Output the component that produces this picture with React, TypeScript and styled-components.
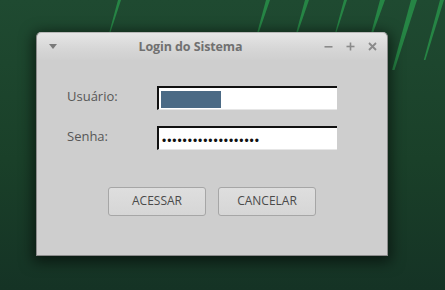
import React from 'react';
import styled, { createGlobalStyle } from 'styled-components';

const GlobalStyle = createGlobalStyle`
	html, body {
		margin: 0;
		padding: 0;
		width: 445px;
		height: 290px;
		overflow: hidden;
	}
	body {
		font-family: 'Open Sans', 'Noto Sans', sans-serif;
	}
`;

const Desktop = styled.div`
	position: relative;
	width: 445px;
	height: 290px;
	overflow: hidden;
	background: linear-gradient(180deg, #1f4a31 0%, #1a4029 55%, #153325 100%);
`;

const Wallpaper = styled.svg`
	position: absolute;
	left: 0;
	top: 0;
`;

const Window = styled.div`
	position: absolute;
	left: 36px;
	top: 32px;
	width: 350px;
	height: 222px;
	display: flex;
	flex-direction: column;
	background: #cecece;
	border: 1px solid #8c8c8c;
	border-top-color: #b8b8b8;
	border-radius: 5px 5px 0 0;
	box-shadow: 0 3px 14px 3px rgba(0, 0, 0, 0.55);
`;

const TitleBar = styled.div`
	height: 27px;
	display: flex;
	align-items: center;
	padding: 0 10px 0 12px;
	border-radius: 5px 5px 0 0;
	background: linear-gradient(180deg, #e6e6e6 0%, #d6d6d6 60%, #cfcfcf 100%);
`;

const Title = styled.div`
	flex: 1;
	text-align: center;
	font-family: 'Open Sans', sans-serif;
	font-weight: 700;
	font-size: 12.5px;
	color: #707070;
	letter-spacing: -0.1px;
`;

const Controls = styled.div`
	display: flex;
	align-items: center;
	gap: 13px;
`;

const IconBox = styled.svg`
	display: block;
	flex: none;
`;

const Body = styled.div`
	flex: 1;
	display: flex;
	flex-direction: column;
	padding: 26px 0 0 30px;
`;

const Form = styled.div`
	display: grid;
	grid-template-columns: 90px 180px;
	row-gap: 16px;
	align-items: center;
`;

const Label = styled.label`
	font-size: 13px;
	color: #575757;
	padding-bottom: 5px;
`;

const Field = styled.div`
	box-sizing: border-box;
	height: 24px;
	display: flex;
	align-items: center;
	padding: 2px 3px 1px 2px;
	background: #ffffff;
	border-top: 2px solid #111;
	border-left: 2px solid #111;
	border-bottom: 1px solid #e6e6e6;
`;

const Selection = styled.span`
	display: block;
	width: 60px;
	height: 17px;
	margin-top: 1px;
	background: #4b6a85;
`;

const Dots = styled.span`
	font-family: 'Liberation Sans', sans-serif;
	font-size: 12px;
	letter-spacing: 0.95px;
	color: #111;
	padding-top: 3px;
	padding-left: 1px;
`;

const Actions = styled.div`
	display: flex;
	justify-content: center;
	gap: 12px;
	margin-top: 37px;
	padding-right: 30px;
`;

const Button = styled.button`
	box-sizing: border-box;
	width: 98px;
	height: 29px;
	border: 1px solid #a6a6a6;
	border-radius: 3px;
	background: linear-gradient(180deg, #dedede 0%, #d6d6d6 100%);
	font-family: 'Open Sans', sans-serif;
	font-size: 12px;
	color: #4a4a4a;
	padding: 0;
	padding-bottom: 2px;
`;

const streaks = [
	{ x: 118, w: 3, len: 32 },
	{ x: 266, w: 4, len: 32 },
	{ x: 305, w: 4, len: 32 },
	{ x: 344, w: 3, len: 32 },
	{ x: 380, w: 5, len: 32 },
	{ x: 411, w: 6, len: 70 },
	{ x: 440, w: 4, len: 60 },
];

const App = () => {
	return (
		<Desktop>
			<GlobalStyle />
			<Wallpaper width="445" height="290" viewBox="0 0 445 290">
				{streaks.map((s, i) => (
					<polygon
						key={i}
						points={`${s.x},0 ${s.x + s.w},0 ${s.x + s.w * 0.4 - s.len * 0.27},${s.len} ${s.x - s.len * 0.27},${s.len}`}
						fill="#2a9a4c"
						opacity={0.75}
					/>
				))}
			</Wallpaper>
			<Window>
				<TitleBar>
					<IconBox width="8" height="5" viewBox="0 0 8 5">
						<polygon points="0,0 8,0 4,5" fill="#7a7a7a" />
					</IconBox>
					<Title>Login do Sistema</Title>
					<Controls>
						<IconBox width="9" height="9" viewBox="0 0 9 9">
							<rect x="0.5" y="4" width="8" height="1.6" fill="#8a8a8a" />
						</IconBox>
						<IconBox width="9" height="9" viewBox="0 0 9 9">
							<rect x="0.5" y="3.7" width="8" height="1.6" fill="#8a8a8a" />
							<rect x="3.7" y="0.5" width="1.6" height="8" fill="#8a8a8a" />
						</IconBox>
						<IconBox width="9" height="9" viewBox="0 0 9 9">
							<path d="M1 1 L8 8 M8 1 L1 8" stroke="#8a8a8a" strokeWidth="1.8" />
						</IconBox>
					</Controls>
				</TitleBar>
				<Body>
					<Form>
						<Label>Usuário:</Label>
						<Field>
							<Selection />
						</Field>
						<Label>Senha:</Label>
						<Field>
							<Dots>{'•'.repeat(19)}</Dots>
						</Field>
					</Form>
					<Actions>
						<Button>ACESSAR</Button>
						<Button>CANCELAR</Button>
					</Actions>
				</Body>
			</Window>
		</Desktop>
	);
};

export default App;
